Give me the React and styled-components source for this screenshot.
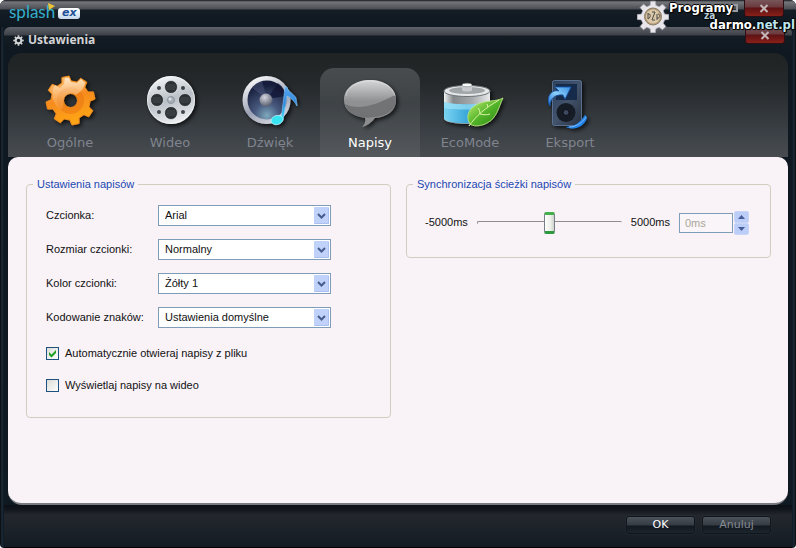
import React, { useState } from 'react';
import styled, { createGlobalStyle, css } from 'styled-components';

const GlobalStyle = createGlobalStyle`
* { box-sizing: border-box; }
body {
margin:0;
background:#fff;
}
`;

const uiFont = css`
font-family:'Liberation Sans', Arial, sans-serif;
font-size:11px;
line-height:13px;
`;

const Frame = styled.div`
${uiFont};
position:relative;
display:flex;
flex-direction:column;
min-height:100vh;
padding:0 4px;
border-radius:6px 6px 4px 4px;
overflow:hidden;
background:linear-gradient(90deg, #05090d 0, #1d2b38 2px, #0d1820 4px, #0d1820 calc(100% - 4px), #1d2b38 calc(100% - 2px), #05090d 100%);
`;
const AppBar = styled.header`
display:flex;
align-items:center;
height:27px;
margin:0 -4px;
padding:0 12px 0 9px;
background:linear-gradient(#15181c 0, #74767b 2px, #4a4d53 9px, #141c24 10px, #0e1820 100%);
`;
const Logo = styled.span`
font-family:Lato, sans-serif;
font-size:17px;
line-height:20px;
padding-bottom:4px;
color:#35aecb;
`;
const Flag = styled.svg`
align-self:flex-start;
margin:3px 0 0 -7px;
`;
const Badge = styled.span`
width:22px;
height:11px;
margin-left:3px;
border-radius:3px;
background:linear-gradient(#fff, #c4d8ee);
color:#1c4f96;
font:italic bold 11px/10px 'DejaVu Sans', sans-serif;
text-align:center;
`;
const Controls = styled.div`
display:flex;
align-self:flex-start;
margin-left:auto;
`;
const Control = styled.button`
display:flex;
align-items:center;
justify-content:center;
width:${p => (p.$close ? 40 : 20)}px;
height:17px;
padding:0;
border:1px solid ${p => (p.$close ? '#2a1014' : 'transparent')};
border-top:0;
border-radius:0 0 3px 3px;
background:${p => (p.$close ? 'linear-gradient(#77565a 0, #6b3a3e 7px, #5c1214 8px, #8a2019 100%)' : 'none')};
`;

const Dialog = styled.main`
display:flex;
flex:1;
flex-direction:column;
border-radius:6px 6px 0 0;
padding:0 4px;
background:linear-gradient(#606369 0, #3d4248 8px, #131b23 9px, #0f1820 26px, #0f1922 100%);
`;
const TitleBar = styled.div`
display:flex;
align-items:center;
gap:4px;
height:26px;
padding:0 3px 0 5px;
`;
const Title = styled.h1`
margin:0;
font:bold 12px/14px 'Open Sans', 'Noto Sans', sans-serif;
color:#d4d4d4;
`;
const Tabs = styled.div`
display:flex;
align-items:flex-end;
padding:15px 12px 0;
border-radius:14px 14px 0 0;
background:linear-gradient(#1f2324 0, #26292b 30%, #3a4045 75%, #484c50 100%);
`;
const Tab = styled.button`
display:flex;
flex-direction:column;
align-items:center;
gap:3px;
flex:0 1 100px;
padding:4px 0 6px;
border:0;
border-radius:14px 14px 0 0;
background:${p => (p.$active ? 'linear-gradient(#484c4f, #3e4346 40%, #55595d)' : 'none')};
color:${p => (p.$active ? '#fff' : '#80848f')};
font:13px/16px 'DejaVu Sans', sans-serif;
`;
const Panel = styled.section`
display:grid;
flex:1;
grid-template-columns:1fr 1fr;
align-items:start;
gap:15px;
padding:20px 17px 20px 18px;
border-bottom:2px solid #777a7e;
border-radius:10px 10px 14px 14px;
background:#f9f3f8;
`;
const Group = styled.fieldset`
min-width:0;
margin:0;
padding:${p => p.$pad};
border:1px solid #d3cdc0;
border-radius:4px;
color:#111;
`;
const Legend = styled.legend`
height:14px;
margin-left:${p => p.$shift}px;
padding:0 4px;
line-height:14px;
color:#2148b0;
`;
const Fields = styled.div`
display:grid;
grid-template-columns:112px 173px;
align-items:center;
row-gap:13px;
`;
const SelectBox = styled.div`
display:grid;
align-items:center;
& > * { grid-area:1 / 1; }
& > svg {
justify-self:end;
margin-right:2px;
pointer-events:none;
}
`;
const Select = styled.select`
${uiFont};
appearance:none;
height:21px;
padding:0 20px 0 6px;
border:1px solid #7f9db9;
border-radius:0;
background:#fff;
color:#111;
`;
const Checks = styled.div`
display:flex;
flex-direction:column;
gap:19px;
margin-top:19px;
`;
const CheckLabel = styled.label`
display:flex;
align-items:center;
gap:6px;
`;
const Check = styled.span`
display:grid;
width:13px;
height:13px;
& > * { grid-area:1 / 1; }
& > svg {
display:none;
pointer-events:none;
}
& > input:checked + svg { display:block; }
`;
const CheckInput = styled.input`
appearance:none;
width:13px;
height:13px;
margin:0;
border:1px solid #1c5180;
background:linear-gradient(135deg, #dcdcd7, #fff);
`;
const SyncRow = styled.div`
display:flex;
align-items:center;
gap:9px;
height:25px;
`;
const Slider = styled.input`
appearance:none;
flex:1;
min-width:0;
height:21px;
margin:0;
background:none;
&::-webkit-slider-runnable-track {
height:3px;
border-top:1px solid #8f8d89;
border-left:1px solid #8f8d89;
border-radius:2px;
}
&::-webkit-slider-thumb {
appearance:none;
width:11px;
height:22px;
margin-top:-10px;
border:1px solid #77808a;
border-top:3px solid #44b04c;
border-bottom:3px solid #2e9a40;
border-radius:2px;
background:linear-gradient(90deg, #fff, #eef0ea 60%, #cfd3cc);
}
`;
const Spin = styled.div`
display:flex;
align-items:center;
gap:1px;
`;
const SpinInput = styled.input`
${uiFont};
width:54px;
height:20px;
padding:0 5px;
border:1px solid #7f9db9;
background:#f9f5f8;
color:#aaa69a;
`;
const SpinButtons = styled.div`
display:flex;
flex-direction:column;
`;
const SpinButton = styled.button`
display:flex;
align-items:center;
justify-content:center;
width:15px;
height:12px;
padding:0;
border:1px solid #c9d6f8;
border-radius:2px;
background:#bccdf8;
`;
const Footer = styled.footer`
display:flex;
justify-content:flex-end;
gap:7px;
margin:0 -4px;
padding:11px 21px 13px;
border-bottom:1px solid #000;
background:linear-gradient(#0c1016 0, #10141b 4px, #23262d 10px, #1c222a 60%, #121a22 100%);
`;
const FootButton = styled.button`
width:69px;
height:18px;
padding:0;
border:1px solid #10161c;
border-radius:3px;
background:linear-gradient(#4c5259 0, #353c44 8px, #12181f 9px, #1c252e 100%);
box-shadow:0 0 1px #4a525a;
color:${p => (p.$dim ? '#858991' : '#fff')};
font:11px/16px 'DejaVu Sans', sans-serif;
`;
const Watermark = styled.div`
position:absolute;
top:0;
right:1px;
display:flex;
pointer-events:none;
`;
const Words = styled.div`
display:flex;
flex-direction:column;
width:126px;
padding-top:1px;
font:bold 13px/13px 'DejaVu Sans Condensed', 'DejaVu Sans', sans-serif;
color:#fff;
text-shadow:1px 0 #000, -1px 0 #000, 0 1px #000, 0 -1px #000, 1px 1px 1px #000;
`;
const Small = styled.span`
padding-left:35px;
font-size:10px;
line-height:4px;
color:#b8cdd6;
`;
const Domain = styled.span`
align-self:flex-end;
`;
const Pale = styled.span`
color:#bfe6ee;
`;

const gearPath = (cx, cy, outer, inner, teeth, turn) => {
    const step = 360 / teeth;
    const pts = [];
    for (let i = 0; i < teeth; i++) {
        [[-0.31, inner], [-0.19, outer], [0.19, outer], [0.31, inner]].forEach(([k, r]) => {
            const a = ((turn + (i + k) * step - 90) * Math.PI) / 180;
            pts.push(`${(cx + r * Math.cos(a)).toFixed(2)} ${(cy + r * Math.sin(a)).toFixed(2)}`);
        });
    }
    return `M${pts.join('L')}Z`;
};

const hole = (cx, cy, r) => `M${cx - r} ${cy}a${r} ${r} 0 1 0 ${r * 2} 0a${r} ${r} 0 1 0 ${-r * 2} 0Z`;

const PictureSvg = styled.svg`
overflow:visible;
`;

const Picture = ({ children }) => (
    <PictureSvg width="64" height="60" viewBox="0 0 64 60" aria-hidden="true">
        <defs>
            <filter id="drop" x="-20%" y="-20%" width="150%" height="150%">
                <feDropShadow dx="2" dy="2" stdDeviation="2" floodColor="#000" floodOpacity="0.75" />
            </filter>
        </defs>
        <g filter="url(#drop)">{children}</g>
    </PictureSvg>
);

const GearIcon = () => (
    <Picture>
        <linearGradient id="orange" x1="0.3" y1="0" x2="0.6" y2="1">
            <stop offset="0" stopColor="#ffc47e" />
            <stop offset="0.45" stopColor="#f68b1f" />
            <stop offset="1" stopColor="#ffa914" />
        </linearGradient>
        <linearGradient id="shine" x1="0" y1="0" x2="0" y2="1">
            <stop offset="0" stopColor="#fff0dc" stopOpacity="0.8" />
            <stop offset="1" stopColor="#ffb25c" stopOpacity="0.25" />
        </linearGradient>
        <path
            d={gearPath(32.5, 28.5, 24.5, 19.5, 8, -12) + hole(32.5, 28.5, 7)}
            fill="url(#orange)" fillRule="evenodd" stroke="#ef8a1d" strokeWidth="1" strokeLinejoin="round"
        />
        <circle cx="32.5" cy="28.5" r="10.5" fill="none" stroke="#e9730f" strokeWidth="6" opacity="0.5" />
        <path
            d="M15 17L17 13L22 16L26 12L27 6L31 6L33 10L39 11L43 7L47 11C46 17 42 20 38 23C35 20 28 21 26 26C25 31 26 34 24 38C17 35 13 27 15 17Z"
            fill="url(#shine)"
        />
    </Picture>
);

const ReelIcon = () => (
    <Picture>
        <linearGradient id="metal" x1="0.3" y1="0" x2="0.6" y2="1">
            <stop offset="0" stopColor="#f4f6f7" />
            <stop offset="0.5" stopColor="#b9c0c7" />
            <stop offset="1" stopColor="#eef0f2" />
        </linearGradient>
        <circle cx="33" cy="28" r="24" fill="url(#metal)" />
        <circle cx="33" cy="28" r="23.5" fill="none" stroke="#fff" strokeOpacity="0.6" />
        {[[33, 15], [19, 28], [47, 28], [33, 41]].map(([x, y]) => (
            <g key={`${x}-${y}`}>
                <circle cx={x} cy={y} r="6.5" fill="#2b3035" stroke="#eceff1" strokeWidth="0.7" />
                <path d={`M${x - 4} ${y - 2}h8M${x - 5} ${y}h10M${x - 4} ${y + 2}h8`} stroke="#454b51" />
            </g>
        ))}
        {[[21, 16], [45, 16], [21, 40], [45, 40]].map(([x, y]) => (
            <circle key={`${x}-${y}`} cx={x} cy={y} r="2" fill="#3e454c" />
        ))}
        <circle cx="33" cy="28" r="3.5" fill="#a7afb7" stroke="#8c949c" />
        <circle cx="32" cy="27" r="1.5" fill="#dde1e5" />
    </Picture>
);

const SoundIcon = () => (
    <Picture>
        <linearGradient id="rim" x1="0.2" y1="0" x2="0.7" y2="1">
            <stop offset="0" stopColor="#fff" />
            <stop offset="0.6" stopColor="#9ba2b4" />
            <stop offset="1" stopColor="#d8dbe2" />
        </linearGradient>
        <radialGradient id="cone" cx="0.5" cy="0.9" r="0.8">
            <stop offset="0" stopColor="#7ea9bd" />
            <stop offset="0.4" stopColor="#47587d" />
            <stop offset="1" stopColor="#171d3b" />
        </radialGradient>
        <radialGradient id="dome" cx="0.4" cy="0.3" r="0.8">
            <stop offset="0" stopColor="#d4d7df" />
            <stop offset="1" stopColor="#4b5061" />
        </radialGradient>
        <linearGradient id="note" x1="0" y1="0" x2="0" y2="1">
            <stop offset="0" stopColor="#58a8ee" />
            <stop offset="0.5" stopColor="#2f86dc" />
            <stop offset="1" stopColor="#35e1f4" />
        </linearGradient>
        <circle cx="28.5" cy="28" r="24" fill="url(#rim)" />
        <circle cx="29" cy="28" r="19.5" fill="url(#cone)" />
        <path d="M29 27L40 11A20 20 0 0 1 48 24Z" fill="#0e1230" opacity="0.7" />
        <path d="M29 27L14 16A19 19 0 0 1 24 9Z" fill="#68749c" opacity="0.3" />
        <circle cx="28" cy="28" r="6.5" fill="url(#dome)" />
        <path d="M47 15L49 15C50 20 55 21 58 26L59 34C56 28 52 25 49 24L45 48L43 48Z" fill="url(#note)" stroke="#8fd0ff" strokeWidth="0.5" />
        <ellipse cx="39" cy="48" rx="6" ry="4.5" fill="#37e3f2" stroke="#b5f6ff" strokeWidth="0.7" transform="rotate(-15 39 48)" />
    </Picture>
);

const BubbleIcon = () => (
    <Picture>
        <linearGradient id="bubble" x1="0" y1="0" x2="0" y2="1">
            <stop offset="0" stopColor="#d6d7d8" />
            <stop offset="0.45" stopColor="#8f9193" />
            <stop offset="1" stopColor="#8a8c8e" />
        </linearGradient>
        <path
            d="M32 8C47 8 58 16 58 28C58 39 49 45 37 46C34 50 29 54 24 55C27 52 28 49 27 46C14 44 6 38 6 28C6 16 17 8 32 8Z"
            fill="url(#bubble)"
        />
        <path d="M7 32C20 39 38 33 57 23C61 36 50 44 37 45C20 48 9 41 7 32Z" fill="#65676a" opacity="0.7" />
        <path d="M8 24C9 15 20 9 32 9C45 9 55 15 57 24" fill="none" stroke="#f3f3f3" strokeOpacity="0.4" />
    </Picture>
);

const BatteryIcon = () => (
    <Picture>
        <linearGradient id="shell" x1="0" y1="0" x2="1" y2="0">
            <stop offset="0" stopColor="#f1f3f4" />
            <stop offset="0.2" stopColor="#85898c" />
            <stop offset="0.6" stopColor="#a5a9ac" />
            <stop offset="1" stopColor="#e8eaeb" />
        </linearGradient>
        <linearGradient id="charge" x1="0" y1="0" x2="1" y2="0">
            <stop offset="0" stopColor="#7bd5f3" />
            <stop offset="0.5" stopColor="#3ba7da" />
            <stop offset="1" stopColor="#84d6f0" />
        </linearGradient>
        <linearGradient id="leaf" x1="0" y1="0.2" x2="0.8" y2="1">
            <stop offset="0" stopColor="#b9e86c" />
            <stop offset="0.5" stopColor="#55b52a" />
            <stop offset="1" stopColor="#2c8b19" />
        </linearGradient>
        <path d="M6 18V46C6 54 52 54 52 46V18Z" fill="url(#shell)" />
        <path d="M6 30C14 33 44 33 52 30V46C52 53 6 53 6 46Z" fill="url(#charge)" />
        <path d="M6 30C14 33 44 33 52 30V36C44 38 14 38 6 36Z" fill="#a9e7fa" opacity="0.6" />
        <ellipse cx="29" cy="19" rx="23" ry="5.5" fill="#e5e7e8" stroke="#6e7376" />
        <ellipse cx="29" cy="18.5" rx="18" ry="3.5" fill="#a0a5a8" />
        <path d="M24 13V18C24 20 34 20 34 18V13Z" fill="#c6cacc" />
        <ellipse cx="29" cy="13" rx="5" ry="1.8" fill="#fafafa" stroke="#808588" strokeWidth="0.6" />
        <path d="M65 26C60 36 59 46 49 51C42 55 34 54 32 52C27 44 31 36 40 32C48 28 58 30 65 26Z" fill="url(#leaf)" stroke="#bce783" strokeWidth="0.8" />
        <path d="M31 54C38 44 47 36 61 28M42 42C42 39 41 37 40 36M42 42C46 43 49 43 52 42M50 35L49 32" fill="none" stroke="#ddf5a8" strokeWidth="1" />
    </Picture>
);

const ExportIcon = () => (
    <Picture>
        <linearGradient id="player" x1="0" y1="0" x2="1" y2="1">
            <stop offset="0" stopColor="#2c415f" />
            <stop offset="0.5" stopColor="#42536c" />
            <stop offset="1" stopColor="#29313e" />
        </linearGradient>
        <linearGradient id="arrow" x1="0" y1="1" x2="1" y2="0">
            <stop offset="0" stopColor="#1667cf" />
            <stop offset="0.5" stopColor="#8dd0fa" />
            <stop offset="1" stopColor="#348cdf" />
        </linearGradient>
        <rect x="14.5" y="8.500" width="29" height="45" rx="2" fill="url(#player)" stroke="#5f7597" strokeWidth="0.9" />
        <rect x="18" y="12" width="21" height="16" fill="#182b48" />
        <circle cx="28" cy="40.5" r="9.5" fill="#161b25" />
        <circle cx="28" cy="40.5" r="3" fill="#3c4a60" stroke="#0c1119" />
        <path d="M12 34C7 25 14 17 21 19L17 15L33 15L27 27L25 23C17 22 12 27 12 34Z" fill="url(#arrow)" stroke="#1554ad" strokeWidth="0.8" />
        <path d="M28 55C36 55 43 50 47 43C51 45 48 50 43 54C38 57 32 57 28 55Z" fill="#2482eb" />
        <path d="M31 55C38 55 44 51 48 45" fill="none" stroke="#8fcaff" strokeWidth="0.8" />
    </Picture>
);

const CloseMark = () => (
    <svg width="10" height="9" viewBox="0 0 10 9" aria-hidden="true">
        <path d="M1.5 1L8.5 8M8.5 1L1.5 8" stroke="#c3b4b6" strokeWidth="2" />
    </svg>
);

const DropArrow = () => (
    <svg width="15" height="17" viewBox="0 0 15 17" aria-hidden="true">
        <rect width="15" height="17" rx="1" fill="#c0d1fa" />
        <path d="M0.5 16.5H14.5V1" fill="none" stroke="#aac0f0" />
        <path d="M4 7L7.5 10.5L11 7" fill="none" stroke="#455c8d" strokeWidth="2" />
    </svg>
);

const tabs = [
    { name: 'Ogólne', Icon: GearIcon },
    { name: 'Wideo', Icon: ReelIcon },
    { name: 'Dźwięk', Icon: SoundIcon },
    { name: 'Napisy', Icon: BubbleIcon },
    { name: 'EcoMode', Icon: BatteryIcon },
    { name: 'Eksport', Icon: ExportIcon },
];

const selects = [
    { id: 'font', label: 'Czcionka:', value: 'Arial' },
    { id: 'size', label: 'Rozmiar czcionki:', value: 'Normalny' },
    { id: 'color', label: 'Kolor czcionki:', value: 'Żółty 1' },
    { id: 'encoding', label: 'Kodowanie znaków:', value: 'Ustawienia domyślne' },
];

const CheckRow = ({ label, initial }) => (
    <CheckLabel>
        <Check>
            <CheckInput type="checkbox" defaultChecked={initial} />
            <svg width="13" height="13" viewBox="0 0 13 13" aria-hidden="true">
                <path d="M3 5L5.5 7.500L10 3V6L5.5 10.500L3 8Z" fill="#21a121" />
            </svg>
        </Check>
        {label}
    </CheckLabel>
);

const App = () => {
    const [active, setActive] = useState('Napisy');
    const [delay, setDelay] = useState(0);
    return (
        <Frame>
            <GlobalStyle />
            <AppBar>
                <Logo>splash</Logo>
                <Flag width="7" height="7" viewBox="0 0 7 7" aria-hidden="true">
                    <path d="M0 0L7 3L1 7Z" fill="#ecc63a" />
                </Flag>
                <Badge>ex</Badge>
                <Controls>
                    <Control aria-label="Maksymalizuj">
                        <svg width="8" height="8" viewBox="0 0 8 8" aria-hidden="true">
                            <rect x="1" y="1" width="6" height="6" fill="none" stroke="#999ba2" strokeWidth="2" />
                        </svg>
                    </Control>
                    <Control $close aria-label="Zamknij program"><CloseMark /></Control>
                </Controls>
            </AppBar>
            <Dialog>
                <TitleBar>
                    <svg width="11" height="11" viewBox="0 0 11 11" aria-hidden="true">
                        <path d={gearPath(5.5, 5.5, 5.3, 3.8, 8, 0) + hole(5.5, 5.5, 1.8)} fill="#d0d2d4" fillRule="evenodd" />
                    </svg>
                    <Title>Ustawienia</Title>
                    <Controls>
                        <Control $close aria-label="Zamknij"><CloseMark /></Control>
                    </Controls>
                </TitleBar>
                <Tabs role="tablist">
                    {tabs.map(({ name, Icon }) => (
                        <Tab
                            key={name}
                            role="tab"
                            aria-selected={active === name}
                            $active={active === name}
                            onClick={() => setActive(name)}
                        >
                            <Icon />
                            {name}
                        </Tab>
                    ))}
                </Tabs>
                <Panel>
                    <Group $pad="14px 19px 25px">
                        <Legend $shift={-13}>Ustawienia napisów</Legend>
                        <Fields>
                            {selects.map(({ id, label, value }) => (
                                <React.Fragment key={id}>
                                    <label htmlFor={id}>{label}</label>
                                    <SelectBox>
                                        <Select id={id}><option>{value}</option></Select>
                                        <DropArrow />
                                    </SelectBox>
                                </React.Fragment>
                            ))}
                        </Fields>
                        <Checks>
                            <CheckRow label="Automatycznie otwieraj napisy z pliku" initial />
                            <CheckRow label="Wyświetlaj napisy na wideo" />
                        </Checks>
                    </Group>
                    <Group $pad="19px 21px 22px 18px">
                        <Legend $shift={-12}>Synchronizacja ścieżki napisów</Legend>
                        <SyncRow>
                            <span>-5000ms</span>
                            <Slider
                                type="range"
                                min="-5000"
                                max="5000"
                                value={delay}
                                aria-label="Synchronizacja"
                                onChange={e => setDelay(Number(e.target.value))}
                            />
                            <span>5000ms</span>
                            <Spin>
                                <SpinInput value={`${delay}ms`} readOnly aria-label="Przesunięcie" />
                                <SpinButtons>
                                    <SpinButton aria-label="Więcej" onClick={() => setDelay(delay + 100)}>
                                        <svg width="7" height="4" viewBox="0 0 7 4" aria-hidden="true"><path d="M0 4L3.5 0L7 4Z" fill="#455c9a" /></svg>
                                    </SpinButton>
                                    <SpinButton aria-label="Mniej" onClick={() => setDelay(delay - 100)}>
                                        <svg width="7" height="4" viewBox="0 0 7 4" aria-hidden="true"><path d="M0 0L3.5 4L7 0Z" fill="#455c9a" /></svg>
                                    </SpinButton>
                                </SpinButtons>
                            </Spin>
                        </SyncRow>
                    </Group>
                </Panel>
                <Footer>
                    <FootButton>OK</FootButton>
                    <FootButton $dim>Anuluj</FootButton>
                </Footer>
            </Dialog>
            <Watermark>
                <svg width="32" height="33" viewBox="0 0 32 33" aria-hidden="true">
                    <path d={gearPath(16, 17, 16, 12, 8, 0)} fill="#e8e6ea" stroke="#a8a7b4" strokeWidth="0.7" />
                    <circle cx="16" cy="16.5" r="8.5" fill="#b59b76" stroke="#8a7d6a" />
                    <circle cx="16" cy="16.5" r="7" fill="#dac8a8" />
                    <path d="M11 14C14 13 14 18 11 19M11 13V19M15 12L18 12L15 20L18 20M21 14C24 14 23 19 20 18M20 14V20" fill="none" stroke="#4e4a48" strokeWidth="1" />
                </svg>
                <Words>
                    <span>Programy</span>
                    <Small>za</Small>
                    <Domain>darmo.<Pale>net.pl</Pale></Domain>
                </Words>
            </Watermark>
        </Frame>
    );
};

export default App;
